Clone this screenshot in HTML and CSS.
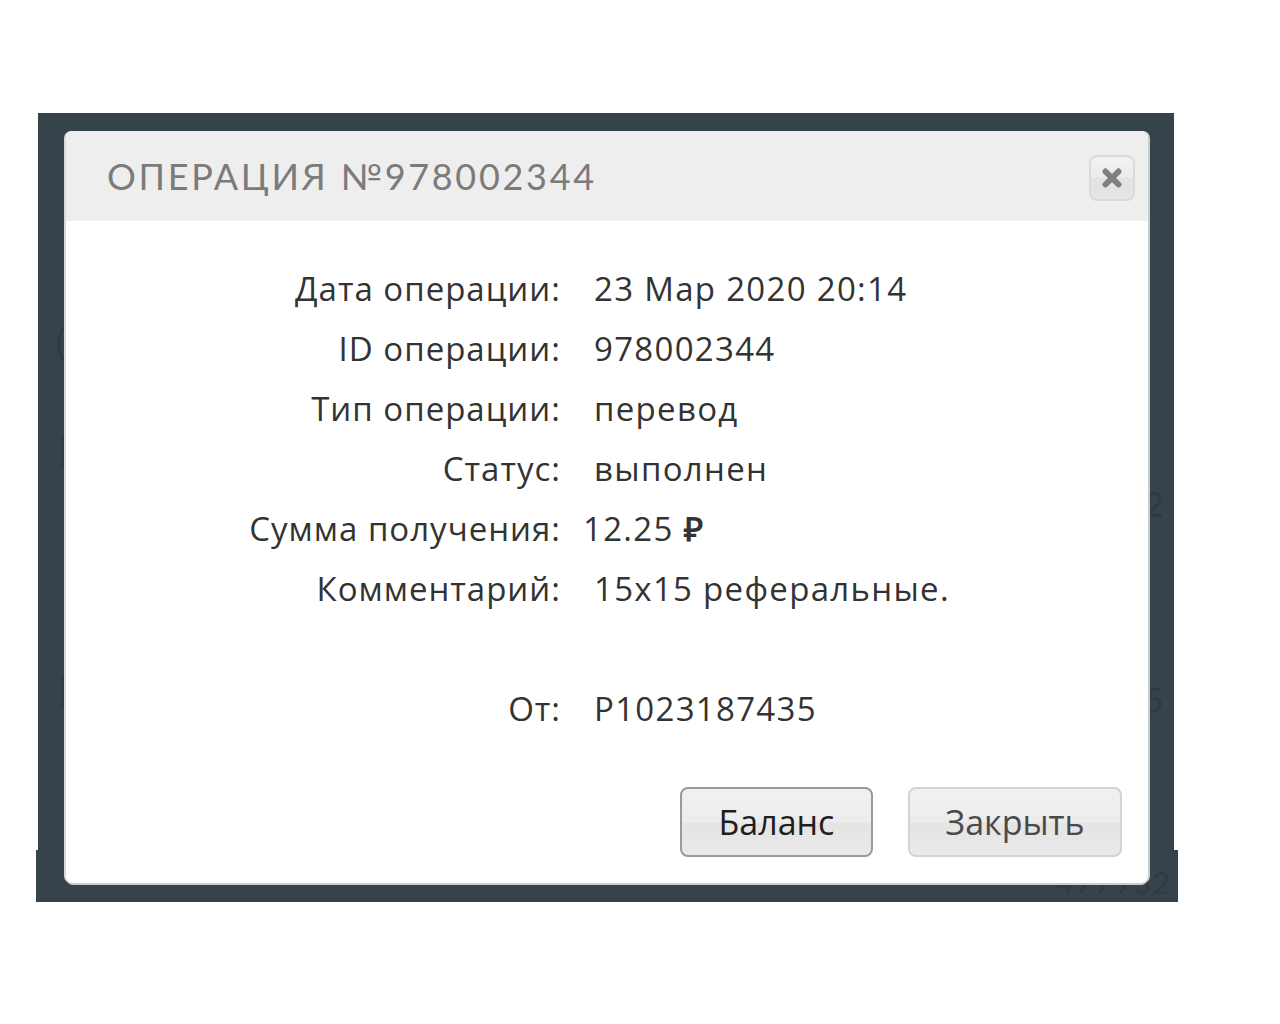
FILE: index.html
```html
<!DOCTYPE html>
<html lang="ru">
<head>
<meta charset="utf-8">
<title>Операция №978002344</title>
<link rel="stylesheet" href="styles.css">
</head>
<body>
<div class="stage">
  <div class="overlay">
    <span class="ghost g1">(</span>
    <span class="ghost g2">2</span>
    <span class="ghost g3">5</span>
    <span class="ghost g4">[</span>
    <span class="ghost g5">[</span>
  </div>
  <div class="overlay-bottom">
    <span class="ghost g6">477932</span>
  </div>

  <div class="modal">
    <div class="modal-head">
      <h1 class="modal-title">Операция №978002344</h1>
      <button class="close-btn" aria-label="Закрыть">
        <svg width="26" height="26" viewBox="0 0 26 26">
          <path d="M6.5 6.5 L19.5 19.5 M19.5 6.5 L6.5 19.5" stroke="#808080" stroke-width="6" stroke-linecap="round"/>
        </svg>
      </button>
    </div>
    <div class="modal-body">
      <div class="info">
        <div class="label">Дата операции:</div><div class="value">23 Мар 2020 20:14</div>
        <div class="label">ID операции:</div><div class="value">978002344</div>
        <div class="label">Тип операции:</div><div class="value">перевод</div>
        <div class="label">Статус:</div><div class="value">выполнен</div>
        <div class="label">Сумма получения:</div><div class="value value-sum">12.25 <b class="rub">₽</b></div>
        <div class="label">Комментарий:</div><div class="value">15x15 реферальные.</div>
        <div class="label"></div><div class="value"></div>
        <div class="label">От:</div><div class="value">P1023187435</div>
      </div>
    </div>
    <div class="modal-foot">
      <button class="btn btn-primary">Баланс</button>
      <button class="btn">Закрыть</button>
    </div>
  </div>
</div>
</body>
</html>
```

FILE: styles.css
```css
html, body {
  margin: 0;
  padding: 0;
  background: #ffffff;
}

body {
  width: 1280px;
  height: 1024px;
  font-family: "Open Sans", "Liberation Sans", sans-serif;
}

.stage {
  position: relative;
  padding-top: 113px;
}

.overlay {
  position: relative;
  margin-left: 38px;
  width: 1136px;
  height: 737px;
  background: #37434b;
}

.overlay-bottom {
  position: relative;
  margin-left: 36px;
  width: 1142px;
  height: 52px;
  background: #37434b;
}

.ghost {
  position: absolute;
  color: #2f3a41;
  font-family: "Lato", sans-serif;
  font-size: 34px;
}
.g1 { left: 18px; top: 208px; }
.g2 { left: 1106px; top: 370px; }
.g3 { left: 1106px; top: 566px; }
.g4 { left: 20px; top: 315px; }
.g5 { left: 20px; top: 555px; }
.g6 { right: 6px; top: 14px; letter-spacing: 2px; font-size: 30px; }

.modal {
  position: absolute;
  left: 66px;
  top: 131px;
  width: 1082px;
  height: 752px;
  background: #ffffff;
  border-radius: 7px;
  box-shadow: -2px 0 0 #d6d8da, 0 2px 0 #c9ccce, 2px 0 0 #c9ccce;
  overflow: hidden;
  display: flex;
  flex-direction: column;
}

.modal-head {
  height: 90px;
  background: #eeeeee;
  display: flex;
  align-items: center;
  justify-content: space-between;
  padding: 0 13px 0 41px;
}

.modal-title {
  margin: 0;
  font-family: "Lato", sans-serif;
  font-weight: 400;
  font-size: 36px;
  letter-spacing: 2.7px;
  text-transform: uppercase;
  color: #7b7b7b;
}

.close-btn {
  width: 46px;
  height: 46px;
  border: 2px solid #dadada;
  border-radius: 8px;
  background: linear-gradient(#f2f2f2 0%, #ebebeb 50%, #e2e2e2 51%, #e6e6e6 100%);
  display: flex;
  align-items: center;
  justify-content: center;
  padding: 0;
  margin-top: 4px;
}

.modal-body {
  flex: 1;
  padding-top: 37px;
}

.info {
  display: grid;
  grid-template-columns: 493px 1fr;
  grid-auto-rows: 60px;
  align-items: center;
  font-family: "Open Sans", sans-serif;
  font-size: 33px;
  letter-spacing: 1px;
  color: #333333;
}

.label {
  text-align: right;
  margin-right: -2px;
}

.value {
  padding-left: 35px;
  letter-spacing: 1.3px;
}

.value-sum {
  padding-left: 24px;
}

.rub {
  font-weight: 700;
}

.modal-foot {
  display: flex;
  justify-content: flex-end;
  gap: 35px;
  padding: 0 26px 26px 0;
}

.btn {
  height: 70px;
  width: 214px;
  border: 2px solid #d3d3d3;
  border-radius: 8px;
  background: linear-gradient(#f1f1f1 0%, #ececec 50%, #e4e4e4 52%, #e9e9e9 100%);
  font-family: "Open Sans", "Liberation Sans", sans-serif;
  font-size: 34px;
  color: #4a4a4a;
  padding: 0;
}

.btn-primary {
  width: 193px;
  border-color: #9a9a9a;
  color: #1e1e1e;
}
```
